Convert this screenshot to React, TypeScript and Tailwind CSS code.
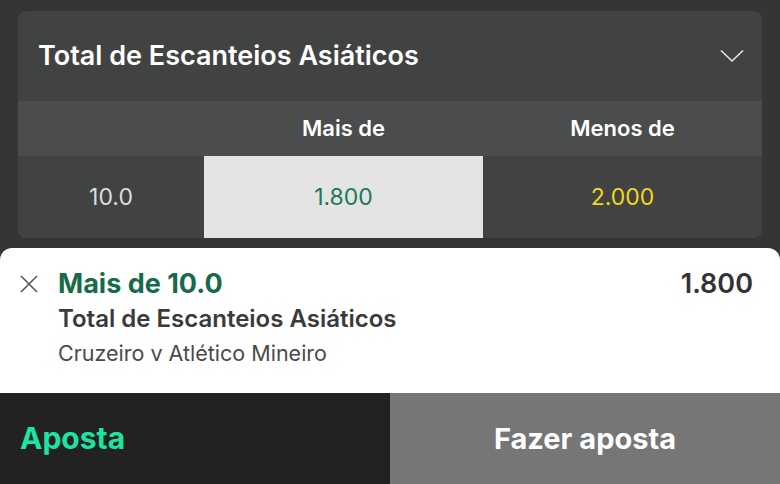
export default function App() {
  return (
    <div className="w-[780px] h-[484px] bg-[#353535] flex flex-col overflow-hidden" style={{ fontFamily: "Inter, 'Noto Sans', sans-serif" }}>
      {/* Mercado */}
      <div className="pt-[11px] px-[18px]">
        <div className="bg-[#414343] rounded-lg overflow-hidden">
          <div className="h-[90px] flex items-center justify-between pl-5 pr-[18px]">
            <h2 className="text-[27px] font-semibold text-white">Total de Escanteios Asiáticos</h2>
            <svg width="24" height="14" viewBox="0 0 24 14" fill="none" stroke="#e5e5e5" strokeWidth="1.6">
              <polyline points="1,1.5 12,12 23,1.5" />
            </svg>
          </div>
          <div className="h-[55px] grid grid-cols-[186px_279px_1fr] bg-[#4a4d4c] text-white text-[22px] font-semibold">
            <div />
            <div className="flex items-center justify-center">Mais de</div>
            <div className="flex items-center justify-center">Menos de</div>
          </div>
          <div className="h-[82px] grid grid-cols-[186px_279px_1fr] text-[23px]">
            <div className="flex items-center justify-center text-[#dcdcdc]">10.0</div>
            <div className="flex items-center justify-center bg-[#e4e4e4] text-[#1b7a52]">1.800</div>
            <div className="flex items-center justify-center text-[#f2d81c]">2.000</div>
          </div>
        </div>
      </div>

      {/* Cupom */}
      <div className="mt-[10px] bg-white rounded-t-xl h-[145px] flex pl-5 pr-[27px] pt-[19px]">
        <svg width="18" height="18" viewBox="0 0 18 18" fill="none" stroke="#555" strokeWidth="1.6" className="mt-[8px] shrink-0">
          <path d="M1 1 L17 17 M17 1 L1 17" />
        </svg>
        <div className="flex-1 ml-5">
          <div className="flex items-start justify-between">
            <p className="text-[27px] font-bold text-[#176b48] leading-[34px]">Mais de 10.0</p>
            <p className="text-[27px] font-semibold text-[#333] leading-[34px]">1.800</p>
          </div>
          <p className="text-[24px] font-semibold text-[#3a3a3a] leading-[36px]">Total de Escanteios Asiáticos</p>
          <p className="text-[21.5px] text-[#4a4a4a] leading-[32px]">Cruzeiro v Atlético Mineiro</p>
        </div>
      </div>

      {/* Barra de aposta */}
      <div className="flex-1 grid grid-cols-2">
        <div className="bg-[#222222] flex items-center pl-5">
          <span className="text-[30px] font-bold text-[#1fe3a0]">Aposta</span>
        </div>
        <button className="bg-[#767676] flex items-center justify-center text-[29px] font-bold text-white">
          Fazer aposta
        </button>
      </div>
    </div>
  );
}
